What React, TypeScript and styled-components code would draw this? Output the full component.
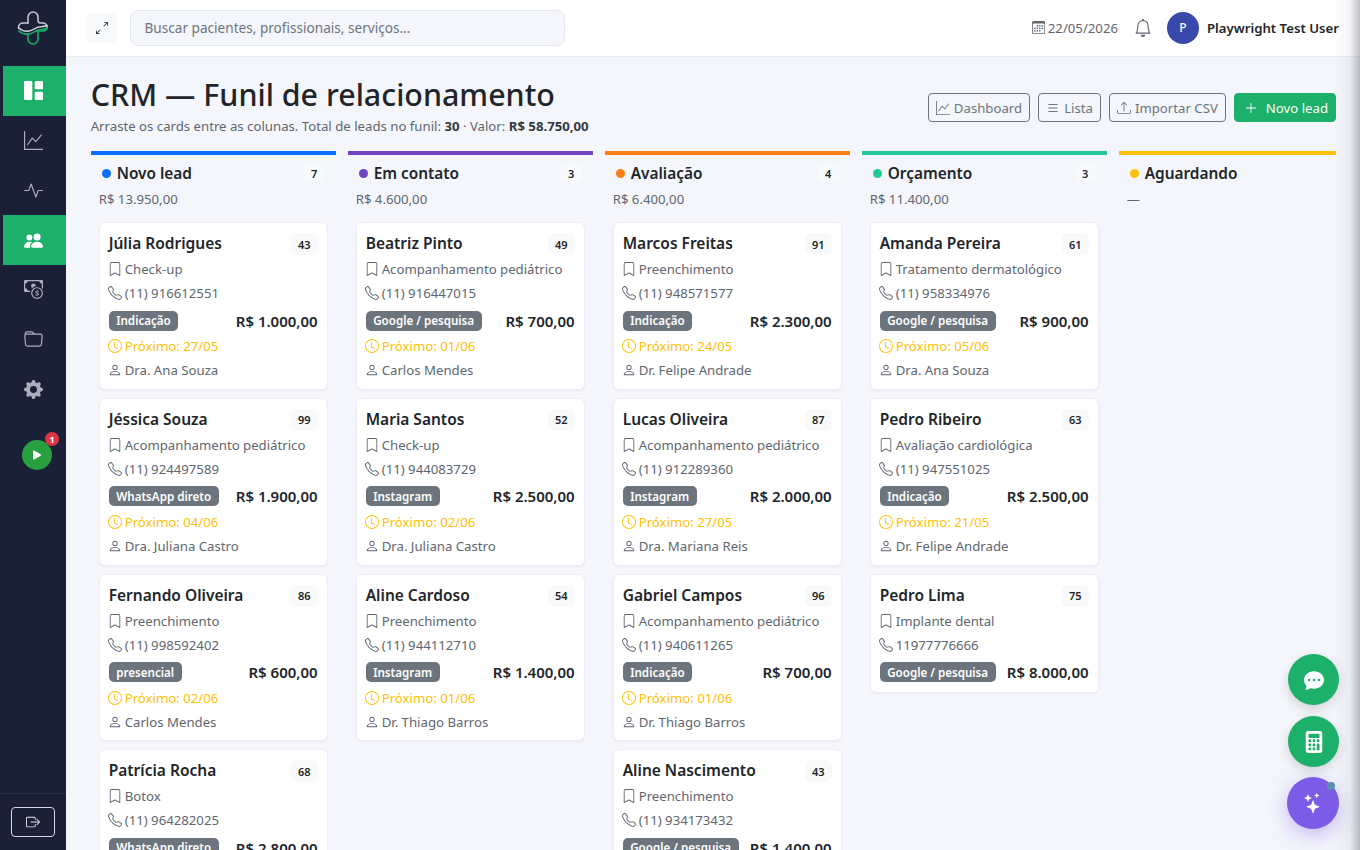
import React from 'react';
import styled, { createGlobalStyle } from 'styled-components';
import {
  BsGrid1X2Fill, BsGraphUp, BsActivity, BsPeopleFill, BsCashCoin, BsFolder, BsGearFill, BsPlayFill,
  BsBoxArrowRight, BsArrowsAngleExpand, BsCalendar3, BsBell, BsBookmark, BsTelephone, BsClock, BsPerson,
  BsList, BsUpload, BsPlusLg, BsChatDotsFill, BsCalculatorFill, BsStars,
} from 'react-icons/bs';

const FONT = '"Noto Sans", "Open Sans", sans-serif';

type Lead = {
  name: string;
  score: number;
  service: string;
  phone: string;
  source: string;
  value: string;
  next?: string;
  owner?: string;
};

type Stage = { title: string; color: string; count?: number; total: string; leads: Lead[] };

const stages: Stage[] = [
  {
    title: 'Novo lead', color: '#0d6efd', count: 7, total: 'R$ 13.950,00',
    leads: [
      { name: 'Júlia Rodrigues', score: 43, service: 'Check-up', phone: '(11) 916612551', source: 'Indicação', value: 'R$ 1.000,00', next: '27/05', owner: 'Dra. Ana Souza' },
      { name: 'Jéssica Souza', score: 99, service: 'Acompanhamento pediátrico', phone: '(11) 924497589', source: 'WhatsApp direto', value: 'R$ 1.900,00', next: '04/06', owner: 'Dra. Juliana Castro' },
      { name: 'Fernando Oliveira', score: 86, service: 'Preenchimento', phone: '(11) 998592402', source: 'presencial', value: 'R$ 600,00', next: '02/06', owner: 'Carlos Mendes' },
      { name: 'Patrícia Rocha', score: 68, service: 'Botox', phone: '(11) 964282025', source: 'WhatsApp direto', value: 'R$ 2.800,00', next: '02/06', owner: 'Carlos Mendes' },
    ],
  },
  {
    title: 'Em contato', color: '#6f42c1', count: 3, total: 'R$ 4.600,00',
    leads: [
      { name: 'Beatriz Pinto', score: 49, service: 'Acompanhamento pediátrico', phone: '(11) 916447015', source: 'Google / pesquisa', value: 'R$ 700,00', next: '01/06', owner: 'Carlos Mendes' },
      { name: 'Maria Santos', score: 52, service: 'Check-up', phone: '(11) 944083729', source: 'Instagram', value: 'R$ 2.500,00', next: '02/06', owner: 'Dra. Juliana Castro' },
      { name: 'Aline Cardoso', score: 54, service: 'Preenchimento', phone: '(11) 944112710', source: 'Instagram', value: 'R$ 1.400,00', next: '01/06', owner: 'Dr. Thiago Barros' },
    ],
  },
  {
    title: 'Avaliação', color: '#fd7e14', count: 4, total: 'R$ 6.400,00',
    leads: [
      { name: 'Marcos Freitas', score: 91, service: 'Preenchimento', phone: '(11) 948571577', source: 'Indicação', value: 'R$ 2.300,00', next: '24/05', owner: 'Dr. Felipe Andrade' },
      { name: 'Lucas Oliveira', score: 87, service: 'Acompanhamento pediátrico', phone: '(11) 912289360', source: 'Instagram', value: 'R$ 2.000,00', next: '27/05', owner: 'Dra. Mariana Reis' },
      { name: 'Gabriel Campos', score: 96, service: 'Acompanhamento pediátrico', phone: '(11) 940611265', source: 'Indicação', value: 'R$ 700,00', next: '01/06', owner: 'Dr. Thiago Barros' },
      { name: 'Aline Nascimento', score: 43, service: 'Preenchimento', phone: '(11) 934173432', source: 'Google / pesquisa', value: 'R$ 1.400,00', next: '01/06', owner: 'Dr. Thiago Barros' },
    ],
  },
  {
    title: 'Orçamento', color: '#20c997', count: 3, total: 'R$ 11.400,00',
    leads: [
      { name: 'Amanda Pereira', score: 61, service: 'Tratamento dermatológico', phone: '(11) 958334976', source: 'Google / pesquisa', value: 'R$ 900,00', next: '05/06', owner: 'Dra. Ana Souza' },
      { name: 'Pedro Ribeiro', score: 63, service: 'Avaliação cardiológica', phone: '(11) 947551025', source: 'Indicação', value: 'R$ 2.500,00', next: '21/05', owner: 'Dr. Felipe Andrade' },
      { name: 'Pedro Lima', score: 75, service: 'Implante dental', phone: '11977776666', source: 'Google / pesquisa', value: 'R$ 8.000,00' },
    ],
  },
  { title: 'Aguardando', color: '#ffc107', total: '—', leads: [] },
];

const GlobalStyle = createGlobalStyle`
  html, body { margin: 0; padding: 0; height: 100%; overflow: hidden; }
  body { font-family: ${FONT}; background: #f4f6fb; color: #212529; }
  * { box-sizing: border-box; }
`;

const Shell = styled.div`
  display: flex;
  width: 1360px;
  height: 850px;
  overflow: hidden;
  position: relative;
`;

const Sidebar = styled.aside`
  flex: 0 0 66px;
  background: #1a2035;
  display: flex;
  flex-direction: column;
`;

const LogoBox = styled.div`
  height: 56px;
  display: flex;
  align-items: center;
  justify-content: center;
  margin-bottom: 10px;
`;

const NavList = styled.nav`
  flex: 1;
  display: flex;
  flex-direction: column;
`;

const NavItem = styled.div<{ $active?: boolean }>`
  height: 49.75px;
  margin-left: 3px;
  display: flex;
  align-items: center;
  justify-content: center;
  font-size: 19px;
  padding-right: 3px;
  color: ${(p) => (p.$active ? '#fff' : '#a9afbc')};
  background: ${(p) => (p.$active ? '#1cb06a' : 'transparent')};
`;

const PlayWrap = styled.div`
  height: 78px;
  padding-left: 22px;
  padding-top: 26px;
`;

const PlayButton = styled.div`
  position: relative;
  width: 30px;
  height: 30px;
  border-radius: 50%;
  background: #28a03f;
  color: #fff;
  display: flex;
  align-items: center;
  justify-content: center;
  font-size: 16px;
`;

const PlayBadge = styled.span`
  position: absolute;
  top: -8px;
  right: -7px;
  width: 14px;
  height: 14px;
  border-radius: 50%;
  background: #dc3545;
  color: #fff;
  font-size: 9px;
  font-weight: 700;
  display: flex;
  align-items: center;
  justify-content: center;
`;

const SideFooter = styled.div`
  height: 57px;
  border-top: 1px solid #2a3047;
  display: flex;
  align-items: center;
  justify-content: center;
`;

const LogoutButton = styled.div`
  width: 44px;
  height: 30px;
  border: 1px solid #d5d9e4;
  border-radius: 4px;
  display: flex;
  align-items: center;
  justify-content: center;
  color: #e3e6ee;
  font-size: 14px;
`;

const Main = styled.div`
  flex: 1;
  min-width: 0;
  display: flex;
  flex-direction: column;
`;

const Topbar = styled.header`
  flex: 0 0 57px;
  background: #fff;
  border-bottom: 1px solid #e9ebf1;
  display: flex;
  align-items: center;
  padding: 0 21px 1px 21px;
`;

const ExpandButton = styled.div`
  width: 30px;
  height: 30px;
  border-radius: 4px;
  background: #f8f9fa;
  display: flex;
  align-items: center;
  justify-content: center;
  font-size: 12px;
  color: #212529;
  margin-right: 13px;
`;

const SearchBox = styled.div`
  width: 435px;
  height: 36px;
  border: 1px solid #e3e7ef;
  border-radius: 8px;
  background: #f4f6fb;
  color: #6c757d;
  font-size: 13.6px;
  display: flex;
  align-items: center;
  padding-left: 13.5px;
`;

const TopRight = styled.div`
  margin-left: auto;
  display: flex;
  align-items: center;
`;

const DateText = styled.span`
  display: flex;
  align-items: center;
  gap: 3px;
  font-size: 13.2px;
  color: #5f6670;
  margin-right: 16px;
`;

const BellIcon = styled.span`
  display: flex;
  font-size: 18px;
  color: #5f6670;
  margin-right: 15px;
`;

const Avatar = styled.div`
  width: 32px;
  height: 32px;
  border-radius: 50%;
  background: #3949ab;
  color: #fff;
  font-size: 12px;
  font-weight: 500;
  display: flex;
  align-items: center;
  justify-content: center;
  margin-right: 8px;
`;

const UserName = styled.span`
  font-size: 13.2px;
  font-weight: 600;
  color: #212529;
`;

const Content = styled.main`
  flex: 1;
  min-height: 0;
  overflow: hidden;
  padding: 16px 24px 0 24.7px;
`;

const PageHead = styled.div`
  display: flex;
  align-items: flex-start;
  justify-content: space-between;
  margin-bottom: 16px;
`;

const Title = styled.h1`
  margin: 0;
  font-size: 30.4px;
  line-height: 44px;
  font-weight: 500;
  color: #212529;
`;

const Subtitle = styled.p`
  margin: 0;
  font-size: 13.2px;
  line-height: 18px;
  color: #5f6670;
  b { font-weight: 700; color: #343a40; }
`;

const Actions = styled.div`
  display: flex;
  gap: 8px;
  margin-top: 20px;
`;

const ActionButton = styled.div<{ $primary?: boolean }>`
  height: 29px;
  display: flex;
  align-items: center;
  gap: ${(p) => (p.$primary ? '8px' : '4px')};
  padding: 0 7px 0 ${(p) => (p.$primary ? '9px' : '7px')};
  border-radius: 4px;
  font-size: 13.2px;
  border: 1px solid ${(p) => (p.$primary ? '#1cb06a' : '#6c757d')};
  background: ${(p) => (p.$primary ? '#1cb06a' : 'transparent')};
  color: ${(p) => (p.$primary ? '#fff' : '#6c757d')};
  svg { font-size: 14px; }
`;

const Board = styled.div`
  display: flex;
  gap: 12px;
  width: 1245px;
  overflow: hidden;
`;

const Column = styled.section<{ $color: string }>`
  flex: 0 0 245px;
  border-top: 4px solid ${(p) => p.$color};
  padding: 0 8px;
`;

const ColumnHead = styled.div`
  display: flex;
  align-items: center;
  height: 35px;
  padding: 1px 3px 0 3px;
`;

const Dot = styled.span<{ $color: string }>`
  flex: 0 0 9px;
  height: 9px;
  border-radius: 50%;
  background: ${(p) => p.$color};
  margin-right: 6px;
`;

const ColumnTitle = styled.span`
  font-size: 15.4px;
  font-weight: 600;
  color: #212529;
`;

const CountBadge = styled.span`
  margin-left: auto;
  min-width: 21px;
  height: 18px;
  border-radius: 6px;
  background: #f8f9fa;
  font-size: 11px;
  font-weight: 600;
  color: #212529;
  display: flex;
  align-items: center;
  justify-content: center;
`;

const ColumnTotal = styled.div`
  font-size: 13.2px;
  line-height: 18px;
  color: #5f6670;
  margin-bottom: 14px;
`;

const CardList = styled.div`
  display: flex;
  flex-direction: column;
  gap: 8px;
`;

const Card = styled.article`
  background: #fff;
  border: 1px solid #eceef3;
  border-radius: 6px;
  box-shadow: 0 1px 2px rgba(0, 0, 0, 0.05);
  padding: 8px 9px 6.75px;
`;

const CardTop = styled.div`
  display: flex;
  align-items: flex-start;
  justify-content: space-between;
  height: 24px;
  margin-bottom: 2px;
`;

const LeadName = styled.span`
  font-size: 15.5px;
  line-height: 24px;
  font-weight: 600;
  color: #212529;
`;

const Score = styled.span`
  min-width: 27px;
  height: 22px;
  margin-top: 2px;
  border-radius: 6px;
  background: #f8f9fa;
  font-size: 11px;
  font-weight: 600;
  color: #212529;
  display: flex;
  align-items: center;
  justify-content: center;
`;

const InfoLine = styled.div<{ $warn?: boolean }>`
  display: flex;
  align-items: center;
  gap: 2.5px;
  height: 24px;
  font-size: 13.2px;
  color: ${(p) => (p.$warn ? '#ffc107' : '#5f6670')};
  svg { flex: none; font-size: 14px; margin-left: -0.5px; }
`;

const MoneyRow = styled.div`
  display: flex;
  align-items: center;
  justify-content: space-between;
  height: 29px;
  padding-top: 2px;
`;

const SourceTag = styled.span`
  height: 20px;
  padding: 0 7.5px;
  border-radius: 5px;
  background: #6c757d;
  color: #fff;
  font-size: 11.6px;
  font-weight: 600;
  display: flex;
  align-items: center;
`;

const Money = styled.span`
  font-size: 15px;
  font-weight: 600;
  color: #212529;
`;

const FabStack = styled.div`
  position: absolute;
  right: 21px;
  bottom: 21px;
  display: flex;
  flex-direction: column;
  align-items: flex-end;
  gap: 10px;
`;

const Fab = styled.div<{ $ai?: boolean; $size?: number }>`
  position: relative;
  width: ${(p) => (p.$ai ? '52px' : '51px')};
  height: ${(p) => (p.$ai ? '52px' : '51px')};
  border-radius: 50%;
  background: ${(p) => (p.$ai ? '#7c5ce6' : '#1cb06a')};
  color: #fff;
  display: flex;
  align-items: center;
  justify-content: center;
  font-size: ${(p) => p.$size || 20}px;
  box-shadow: ${(p) => (p.$ai ? '0 6px 20px rgba(124, 92, 230, 0.4)' : '0 4px 12px rgba(0, 0, 0, 0.15)')};
  &:first-child { margin-bottom: 1px; }
`;

const AiDot = styled.span`
  position: absolute;
  top: 5px;
  right: 4px;
  width: 8px;
  height: 8px;
  border-radius: 50%;
  background: #5b8fb0;
`;

const EdgeShade = styled.div`
  position: absolute;
  top: 0;
  right: 0;
  bottom: 0;
  width: 26px;
  pointer-events: none;
  background: linear-gradient(to right, rgba(60, 65, 80, 0), rgba(60, 65, 80, 0.06) 60%, rgba(60, 65, 80, 0.33));
`;

const Logo = () => (
  <svg width="34" height="34" viewBox="0 0 34 34" fill="none" strokeLinecap="round" strokeLinejoin="round">
    <path d="M12 12V6a5 5 0 0 1 10 0v3.5c0 1.5 1 2.5 2.5 2.5h2.5a4 4 0 0 1 4 5" stroke="#c9ccd4" strokeWidth="1.5" />
    <path d="M12 12H7a4.5 4.5 0 0 0-4.5 5.5" stroke="#c9ccd4" strokeWidth="1.5" />
    <path d="M3 17c3 3 6.500 3.500 10 3s7-3.500 10-4 5.500-.5 8-1.500" stroke="#c9ccd4" strokeWidth="1.5" />
    <path d="M3 20c3 3 6.500 3.500 10 3s7-3.500 10-4 5.500-.5 8-2" stroke="#1cb06a" strokeWidth="1.6" />
    <path d="M12 23.500V28a5 5 0 0 0 10 0v-8h5.500a4 4 0 0 0 3.500-3" stroke="#1cb06a" strokeWidth="1.6" />
  </svg>
);

const LeadCard = ({ lead }: { lead: Lead }) => (
  <Card>
    <CardTop>
      <LeadName>{lead.name}</LeadName>
      <Score>{lead.score}</Score>
    </CardTop>
    <InfoLine><BsBookmark />{lead.service}</InfoLine>
    <InfoLine><BsTelephone />{lead.phone}</InfoLine>
    <MoneyRow>
      <SourceTag>{lead.source}</SourceTag>
      <Money>{lead.value}</Money>
    </MoneyRow>
    {lead.next && <InfoLine $warn><BsClock />Próximo: {lead.next}</InfoLine>}
    {lead.owner && <InfoLine><BsPerson />{lead.owner}</InfoLine>}
  </Card>
);

export default function App() {
  return (
    <Shell>
      <GlobalStyle />
      <Sidebar>
        <LogoBox><Logo /></LogoBox>
        <NavList>
          <NavItem $active><BsGrid1X2Fill /></NavItem>
          <NavItem><BsGraphUp /></NavItem>
          <NavItem><BsActivity /></NavItem>
          <NavItem $active><BsPeopleFill /></NavItem>
          <NavItem><BsCashCoin /></NavItem>
          <NavItem><BsFolder /></NavItem>
          <NavItem><BsGearFill /></NavItem>
          <PlayWrap>
            <PlayButton>
              <BsPlayFill />
              <PlayBadge>1</PlayBadge>
            </PlayButton>
          </PlayWrap>
        </NavList>
        <SideFooter>
          <LogoutButton><BsBoxArrowRight /></LogoutButton>
        </SideFooter>
      </Sidebar>
      <Main>
        <Topbar>
          <ExpandButton><BsArrowsAngleExpand /></ExpandButton>
          <SearchBox>Buscar pacientes, profissionais, serviços...</SearchBox>
          <TopRight>
            <DateText><BsCalendar3 />22/05/2026</DateText>
            <BellIcon><BsBell /></BellIcon>
            <Avatar>P</Avatar>
            <UserName>Playwright Test User</UserName>
          </TopRight>
        </Topbar>
        <Content>
          <PageHead>
            <div>
              <Title>CRM — Funil de relacionamento</Title>
              <Subtitle>Arraste os cards entre as colunas. Total de leads no funil: <b>30</b> · Valor: <b>R$ 58.750,00</b></Subtitle>
            </div>
            <Actions>
              <ActionButton><BsGraphUp />Dashboard</ActionButton>
              <ActionButton><BsList />Lista</ActionButton>
              <ActionButton><BsUpload />Importar CSV</ActionButton>
              <ActionButton $primary><BsPlusLg />Novo lead</ActionButton>
            </Actions>
          </PageHead>
          <Board>
            {stages.map((stage) => (
              <Column key={stage.title} $color={stage.color}>
                <ColumnHead>
                  <Dot $color={stage.color} />
                  <ColumnTitle>{stage.title}</ColumnTitle>
                  {stage.count !== undefined && <CountBadge>{stage.count}</CountBadge>}
                </ColumnHead>
                <ColumnTotal>{stage.total}</ColumnTotal>
                <CardList>
                  {stage.leads.map((lead) => <LeadCard key={lead.name} lead={lead} />)}
                </CardList>
              </Column>
            ))}
          </Board>
        </Content>
      </Main>
      <EdgeShade />
      <FabStack>
        <Fab><BsChatDotsFill /></Fab>
        <Fab $size={22}><BsCalculatorFill /></Fab>
        <Fab $ai><BsStars /><AiDot /></Fab>
      </FabStack>
    </Shell>
  );
}
